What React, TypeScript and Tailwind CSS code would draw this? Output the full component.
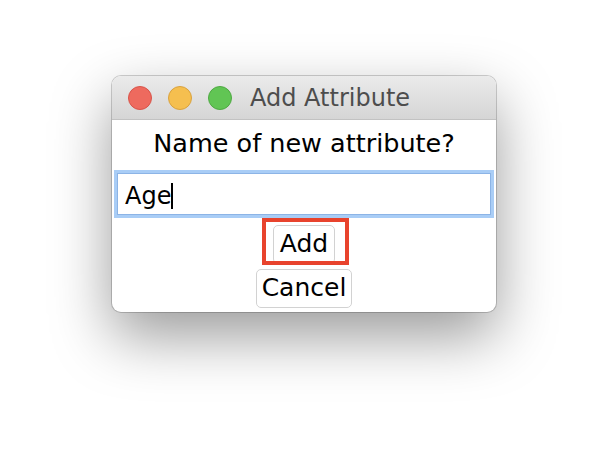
import React from "react";

export default function App() {
  return (
    <div
      className="w-[608px] h-[460px] bg-white flex justify-center pt-[76px]"
      style={{ fontFamily: '"DejaVu Sans", "Noto Sans", sans-serif' }}
    >
      <div className="w-[384px] h-[236px] rounded-[9px] bg-white flex flex-col overflow-hidden shadow-[0_24px_60px_rgba(0,0,0,0.4),0_0_0_1px_rgba(0,0,0,0.18)]">
        {/* Title bar */}
        <div className="h-[44px] shrink-0 flex items-center pl-[16px] bg-gradient-to-b from-[#ebebeb] to-[#d5d5d5] border-b border-[#c2c2c2]">
          <div className="flex items-center gap-[16px]">
            <span className="w-[24px] h-[24px] rounded-full bg-[#ee6a5e] border border-[#d8544a]" />
            <span className="w-[24px] h-[24px] rounded-full bg-[#f5bf4f] border border-[#d9a23f]" />
            <span className="w-[24px] h-[24px] rounded-full bg-[#61c554] border border-[#4fa943]" />
          </div>
          <span className="ml-[18px] text-[24px] leading-[30px] text-[#4d4d4d]">Add Attribute</span>
        </div>

        {/* Content */}
        <div className="flex flex-col items-center pt-[8px]">
          <div className="h-[30px] text-[25.5px] leading-[30px] text-black">Name of new attribute?</div>

          <div className="mt-[15px] w-[374px] h-[42px] border border-[#8cb4e6] shadow-[0_0_0_3px_#a9cdf6] bg-white flex items-start pl-[7px] pt-[7px] text-[24px] leading-[30px] text-black">
            <span>Age</span>
            <span className="inline-block w-[2px] h-[26px] bg-black mt-[2px]" />
          </div>

          <div className="relative mt-[10px]">
            <button className="w-[62px] h-[39px] rounded-[5px] border border-[#d2d2d2] bg-white text-[25px] leading-[30px] text-black flex items-center justify-center pb-[2px]">
              Add
            </button>
            <div className="absolute left-[-11px] top-[-7px] w-[87px] h-[47px] border-[4px] border-[#e8432d]" />
          </div>

          <button className="mt-[5px] w-[96px] h-[39px] rounded-[5px] border border-[#d2d2d2] bg-white text-[25px] leading-[30px] text-black flex items-center justify-center pb-[2px]">
            Cancel
          </button>
        </div>
      </div>
    </div>
  );
}
